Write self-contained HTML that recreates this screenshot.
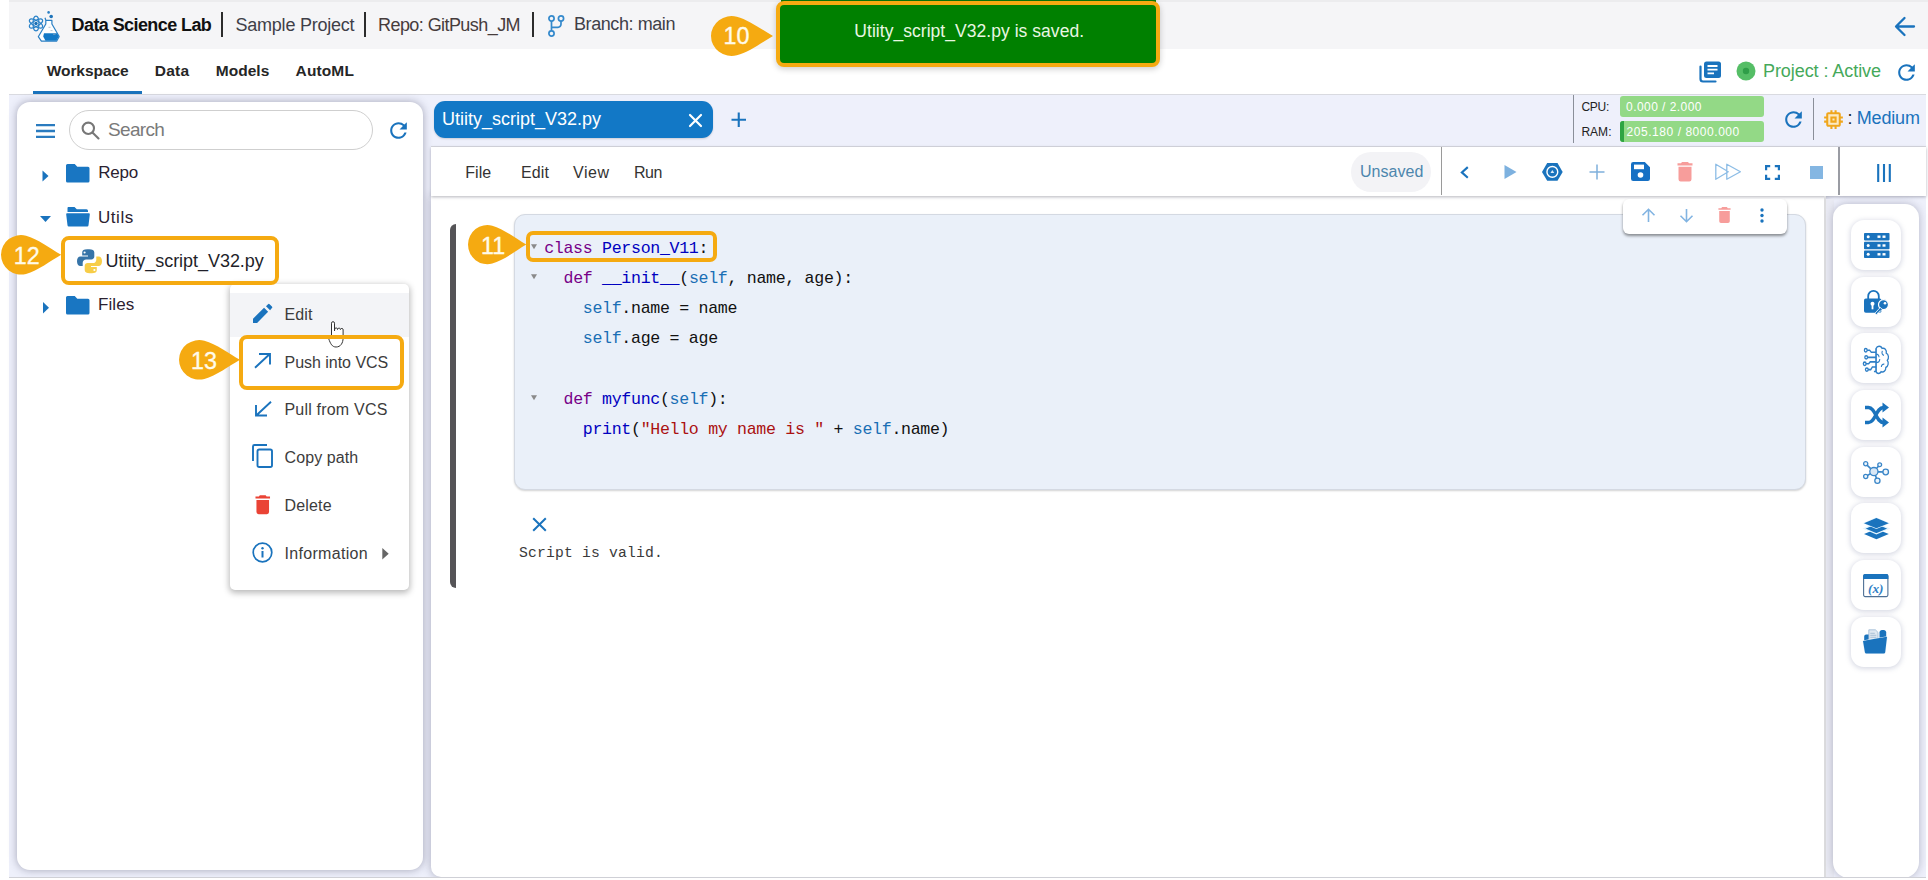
<!DOCTYPE html>
<html lang="en">
<head>
<meta charset="utf-8">
<title>Data Science Lab</title>
<style>
*{box-sizing:border-box;margin:0;padding:0}
html,body{width:1928px;height:880px;overflow:hidden;background:#fff}
body{position:relative;font-family:"Liberation Sans",sans-serif;color:#222}
.a{position:absolute}
.t{position:absolute;white-space:nowrap;line-height:1;transform-origin:0 0}
svg{position:absolute;overflow:visible}
.mono{font-family:"Liberation Mono",monospace}
pre.t{white-space:pre}
/* page regions */
#hdr{left:9px;top:0;width:1919px;height:49px;background:#f5f5f7}
#hdrtop{left:9px;top:0;width:1919px;height:2px;background:#ececee}
#tabs{left:9px;top:49px;width:1919px;height:45px;background:#fff}
#main{left:9px;top:94px;width:1917px;height:783.500px;background:#eef0fb}
#leftp{left:17px;top:102px;width:406px;height:768px;background:#fff;border-radius:13px;box-shadow:0 0 8px 0 rgba(60,60,90,.42)}
#edp{left:431px;top:196px;width:1394px;height:681px;background:#fff;border-radius:0 0 0 10px;box-shadow:0 0 8px 0 rgba(60,60,90,.38)}
#menubar{left:431px;top:147px;width:1495px;height:49px;background:#fff;box-shadow:0 1px 3px rgba(60,60,80,.38)}
#menubar2{left:1840px;top:147px;width:86px;height:48px;background:#fff;box-shadow:0 2px 4px rgba(90,90,110,.35)}
#rside{left:1833px;top:204px;width:86px;height:674px;background:#fff;border-radius:14px 14px 16px 16px;box-shadow:0 0 8px 0 rgba(60,60,90,.32)}
.ib{position:absolute;left:1851px;width:50px;height:50px;background:#fff;border-radius:13px;box-shadow:0 1px 5px 1px rgba(120,125,160,.28)}
.cell{left:514px;top:214px;width:1292px;height:276px;background:#eaf0f9;border:1px solid #d4d9e2;border-radius:11px;box-shadow:0 1px 2px rgba(0,0,0,.18)}
.code{font-size:16.6px;letter-spacing:-.315px;color:#111}
.kw{color:#770088}.df{color:#0000c0}.sf{color:#1a6fb5}.st{color:#aa1111}
.hl{position:absolute;border:4px solid #f5aa11;border-radius:8px}
.num{color:#fffbea;font-size:23.3px;-webkit-text-stroke:.35px #fffbea}
</style>
</head>
<body>
<div class="a" id="hdr"></div>
<div class="a" id="hdrtop"></div>
<div class="a" id="tabs"></div>
<div class="a" id="main"></div>
<!--HEADER-->
<!-- logo: atom + flask -->
<svg style="left:28px;top:10px" width="33" height="33" viewBox="0 0 33 33">
  <g fill="none" stroke="#2a82c8" stroke-width="1.250">
    <ellipse cx="8" cy="13.500" rx="7.400" ry="2.900" transform="rotate(90 8 13.500)"/>
    <ellipse cx="8" cy="13.500" rx="7.400" ry="2.900" transform="rotate(30 8 13.500)"/>
    <ellipse cx="8" cy="13.500" rx="7.400" ry="2.900" transform="rotate(150 8 13.500)"/>
  </g>
  <circle cx="8" cy="13.500" r="1.700" fill="#1b6fb4"/>
  <path d="M17 7.700L17.800 10.300V14L10.300 26.700L13.400 31.200H28.600L31.200 26.500L23.900 14V10.300H18" fill="#fdfeff" stroke="#2a7fc4" stroke-width="1.200" stroke-linejoin="round"/>
  <path d="M16 23.300H29.100L30.800 26.500L28.300 30.800H17.500L15.200 26.500z" fill="#1278c6"/>
  <path d="M20.500 17.300h2M22.500 20.600h2M25 24.300h2.500" stroke="#9ab" stroke-width=".7"/>
  <circle cx="20.600" cy="2.400" r="1.300" fill="#2a7fc4"/>
  <circle cx="23.200" cy="6.500" r="1.800" fill="#1f74ba"/>
</svg>
<span class="t" id="t_dsl" style="left:71.6px;top:15.7px;font-size:18px;font-weight:700;color:#111;letter-spacing:-0.591px">Data Science Lab</span>
<div class="a" style="left:221px;top:12px;width:1.600px;height:25px;background:#2c2c2c"></div>
<span class="t" id="t_sp" style="left:235.5px;top:16px;font-size:18px;color:#3f3f48;letter-spacing:-0.226px">Sample Project</span>
<div class="a" style="left:364px;top:12px;width:1.600px;height:25px;background:#2c2c2c"></div>
<span class="t" id="t_repo" style="left:378.0px;top:16px;font-size:18px;color:#463c3c;letter-spacing:-0.567px">Repo: GitPush_JM</span>
<div class="a" style="left:532px;top:12px;width:1.600px;height:25px;background:#2c2c2c"></div>
<svg style="left:547px;top:14px" width="18" height="24" viewBox="0 0 18 24" fill="none" stroke="#3489cc" stroke-width="1.700">
  <circle cx="4.500" cy="4.500" r="2.600"/><circle cx="14" cy="4.500" r="2.600"/><circle cx="4.500" cy="19.500" r="2.600"/>
  <path d="M4.500 7.100v9.800M14 7.100v3.200a3 3 0 0 1-3 3H4.500"/>
</svg>
<span class="t" id="t_br" style="left:574.0px;top:15px;font-size:18px;color:#3f3f48;letter-spacing:-0.422px">Branch: main</span>
<!-- back arrow -->
<svg style="left:1894px;top:16px" width="22" height="22" viewBox="0 0 22 22" fill="none" stroke="#1a73bd" stroke-width="2.300" stroke-linecap="round" stroke-linejoin="round"><path d="M20 10.500H2.500M10.500 2L2 10.500l8.500 8.500"/></svg>
<!-- tabs -->
<span class="t" id="t_ws" style="left:46.7px;top:63px;font-size:15.500px;font-weight:700;color:#262626;letter-spacing:-0.058px">Workspace</span>
<span class="t" id="t_data" style="left:154.8px;top:63px;font-size:15.500px;font-weight:700;color:#262626;letter-spacing:0.248px">Data</span>
<span class="t" id="t_models" style="left:215.8px;top:63px;font-size:15.500px;font-weight:700;color:#262626;letter-spacing:0.016px">Models</span>
<span class="t" id="t_automl" style="left:295.6px;top:63px;font-size:15.500px;font-weight:700;color:#262626;letter-spacing:0.121px">AutoML</span>
<div class="a" style="left:33px;top:91px;width:109px;height:3px;background:#1a73bd"></div>
<div class="a" style="left:9px;top:94px;width:1917px;height:1px;background:#d9dae0"></div>
<div class="a" style="left:431px;top:146px;width:1495px;height:1px;background:#d9dae0"></div>
<!-- docs icon -->
<svg style="left:1699px;top:61px" width="23" height="22" viewBox="0 0 23 22">
  <path d="M1.500 5.500v12.500a2.500 2.500 0 0 0 2.500 2.500h12.500" fill="none" stroke="#1a73bd" stroke-width="2.200" stroke-linecap="round"/>
  <rect x="5" y="0.500" width="17" height="16.500" rx="2.500" fill="#1a73bd"/>
  <path d="M8.500 5h10M8.500 8.700h10M8.500 12.400h6.500" stroke="#fff" stroke-width="1.800"/>
</svg>
<!-- green dot -->
<svg style="left:1736px;top:61px" width="20" height="20" viewBox="0 0 20 20"><circle cx="10" cy="10" r="9.500" fill="#55be66"/><circle cx="10" cy="10" r="3.200" fill="#2f9e48"/></svg>
<span class="t" id="t_pa" style="left:1763.0px;top:61.500px;font-size:18px;color:#45a95a;letter-spacing:-0.066px">Project : Active</span>
<svg style="left:1893.600px;top:59.600px" width="25" height="25" viewBox="0 0 24 24"><path fill="#1a73bd" d="M17.650 6.350A7.958 7.958 0 0 0 12 4c-4.420 0-7.990 3.580-7.990 8s3.570 8 7.990 8c3.730 0 6.840-2.550 7.730-6h-2.080A5.990 5.990 0 0 1 12 18c-3.310 0-6-2.690-6-6s2.690-6 6-6c1.660 0 3.140.69 4.220 1.780L13 11h7V4l-2.350 2.350z"/></svg>
<!--/HEADER-->
<!--LEFT-->
<div class="a" id="leftp"></div>
<!-- hamburger -->
<svg style="left:36px;top:124px" width="19" height="14" viewBox="0 0 19 14"><path d="M0 1.200h19M0 7h19M0 12.800h19" stroke="#2a7bbf" stroke-width="2.300"/></svg>
<!-- search -->
<div class="a" style="left:69px;top:110px;width:304px;height:40px;border:1px solid #cfcfcf;border-radius:20px;background:#fff"></div>
<svg style="left:81px;top:121px" width="19" height="19" viewBox="0 0 19 19" fill="none" stroke="#777" stroke-width="2.100" stroke-linecap="round"><circle cx="7.300" cy="7.300" r="5.700"/><path d="M11.700 11.700l5.800 5.800"/></svg>
<span class="t" id="t_search" style="left:108.0px;top:120.3px;font-size:19px;color:#7a7a7a;letter-spacing:-0.652px">Search</span>
<svg style="left:386px;top:117.800px" width="25" height="25" viewBox="0 0 24 24"><path fill="#1a73bd" d="M17.650 6.350A7.958 7.958 0 0 0 12 4c-4.420 0-7.990 3.580-7.990 8s3.570 8 7.990 8c3.730 0 6.840-2.550 7.730-6h-2.080A5.990 5.990 0 0 1 12 18c-3.310 0-6-2.690-6-6s2.690-6 6-6c1.660 0 3.140.69 4.220 1.780L13 11h7V4l-2.350 2.350z"/></svg>
<!-- tree: Repo -->
<svg style="left:41.500px;top:170px" width="7" height="12" viewBox="0 0 7 12"><path d="M0.500 0.500L6.500 6 .5 11.500z" fill="#1a73bd"/></svg>
<svg style="left:66px;top:164px" width="24" height="19" viewBox="0 0 24 19"><path d="M1.500 0h7.200l2.600 2.800h10.700A1.500 1.500 0 0 1 23.500 4.300V17a1.500 1.500 0 0 1-1.500 1.500H1.500A1.500 1.500 0 0 1 0 17V1.500A1.500 1.500 0 0 1 1.500 0z" fill="#1976c2"/></svg>
<span class="t" id="t_repo2" style="left:98.2px;top:164px;font-size:17px;color:#2b2230;letter-spacing:-0.185px">Repo</span>
<!-- Utils -->
<svg style="left:40px;top:216px" width="11" height="6" viewBox="0 0 11 6"><path d="M0 0h11L5.500 6z" fill="#1a73bd"/></svg>
<svg style="left:66px;top:207px" width="24" height="19.500" viewBox="0 0 24 19.500"><path d="M2 0h6.500l2.300 2.300h9.700A1.500 1.500 0 0 1 22 3.800V5H1.500V1.500A1.500 1.500 0 0 1 2 0z" fill="#1976c2"/><path d="M1.200 6.300h21.600a1 1 0 0 1 1 1.200l-1.300 10.800a1.300 1.300 0 0 1-1.300 1.200H2.800a1.300 1.300 0 0 1-1.300-1.200L.2 7.500a1 1 0 0 1 1-1.200z" fill="#1976c2"/></svg>
<span class="t" id="t_utils" style="left:98.0px;top:208.7px;font-size:17px;color:#2b2230;letter-spacing:0.537px">Utils</span>
<!-- python file -->
<svg style="left:77px;top:248.500px" width="25" height="24.500" viewBox="0 0 25 24.500">
  <path d="M10.200 0.300c-3.400 0-5 1.100-5 3.300v2.900h5.800v1H3.400C1.300 7.500 0 9.300 0 12.300c0 3 1.300 4.700 3.400 4.700h2.300v-3.200c0-2 1.500-3.400 3.500-3.400h5.200c1.700 0 2.900-1.200 2.900-2.900V3.600c0-2.200-2-3.300-5-3.300h-2.100z" fill="#3674a8"/>
  <circle cx="7.600" cy="3.500" r="1.100" fill="#fff"/>
  <path d="M14.800 24.200c3.400 0 5-1.100 5-3.300V18h-5.800v-1h7.600c2.100 0 3.400-1.800 3.400-4.800 0-3-1.300-4.700-3.400-4.700h-2.300v3.200c0 2-1.500 3.400-3.500 3.400h-5.200c-1.700 0-2.900 1.200-2.900 2.900v3.900c0 2.200 2 3.300 5 3.300h2.100z" fill="#f7cd48"/>
  <circle cx="17.400" cy="21" r="1.100" fill="#fff"/>
</svg>
<span class="t" id="t_file" style="left:105.5px;top:251.500px;font-size:18px;color:#1f1f2a;letter-spacing:-0.041px">Utiity_script_V32.py</span>
<!-- Files -->
<svg style="left:42.500px;top:301.500px" width="6" height="11.500" viewBox="0 0 6 11.500"><path d="M0 0L6 5.750 0 11.500z" fill="#1a73bd"/></svg>
<svg style="left:66px;top:296px" width="24" height="19" viewBox="0 0 24 19"><path d="M1.500 0h7.200l2.600 2.800h10.700A1.500 1.500 0 0 1 23.500 4.300V17a1.500 1.500 0 0 1-1.500 1.500H1.500A1.500 1.500 0 0 1 0 17V1.500A1.500 1.500 0 0 1 1.500 0z" fill="#1976c2"/></svg>
<span class="t" id="t_files" style="left:98.0px;top:295.500px;font-size:17px;color:#2b2230;letter-spacing:0.069px">Files</span>
<!--/LEFT-->
<!--EDITOR-->
<!-- file tab -->
<div class="a" style="left:433.500px;top:100.500px;width:279px;height:37.500px;background:#1278c6;border-radius:11px;box-shadow:0 1px 2px rgba(0,0,0,.15)"></div>
<span class="t" id="t_tab" style="left:442.0px;top:110px;font-size:18px;color:#fff;letter-spacing:-0.004px">Utiity_script_V32.py</span>
<svg style="left:688.500px;top:113.500px" width="13" height="13" viewBox="0 0 13 13"><path d="M1 1l11 11M12 1L1 12" stroke="#fff" stroke-width="2.200" stroke-linecap="round"/></svg>
<svg style="left:731px;top:112px" width="15.500" height="15.500" viewBox="0 0 15.500 15.500"><path d="M7.750 .5v14.500M.5 7.750h14.500" stroke="#1a73bd" stroke-width="2.100"/></svg>
<!-- resources -->
<div class="a" style="left:1573px;top:95px;width:1px;height:48px;background:#8a8f99"></div>
<span class="t" id="t_cpu" style="left:1581.4px;top:101px;font-size:12px;color:#222;letter-spacing:-0.218px">CPU:</span>
<div class="a" style="left:1620px;top:96px;width:144px;height:21px;background:#93d986;border-radius:3px"></div>
<span class="t" id="t_cpuv" style="left:1626.0px;top:100.500px;font-size:12px;color:#fff;letter-spacing:0.457px">0.000 / 2.000</span>
<span class="t" id="t_ram" style="left:1581.4px;top:126px;font-size:12px;color:#222;letter-spacing:0.025px">RAM:</span>
<div class="a" style="left:1620px;top:121px;width:144px;height:21px;background:#93d986;border-radius:3px"></div>
<div class="a" style="left:1620px;top:121px;width:4px;height:21px;background:#2ea443;border-radius:3px 0 0 3px"></div>
<span class="t" id="t_ramv" style="left:1626.6px;top:125.500px;font-size:12px;color:#fff;letter-spacing:0.542px">205.180 / 8000.000</span>
<svg style="left:1780.700px;top:106.900px" width="25" height="25" viewBox="0 0 24 24"><path fill="#1a73bd" d="M17.650 6.350A7.958 7.958 0 0 0 12 4c-4.420 0-7.990 3.580-7.990 8s3.570 8 7.990 8c3.730 0 6.840-2.550 7.730-6h-2.080A5.990 5.990 0 0 1 12 18c-3.310 0-6-2.690-6-6s2.690-6 6-6c1.660 0 3.140.69 4.220 1.780L13 11h7V4l-2.350 2.350z"/></svg>
<div class="a" style="left:1813px;top:98px;width:1px;height:42px;background:#8a8f99"></div>
<!-- chip icon -->
<svg style="left:1820.900px;top:107px" width="25" height="25" viewBox="0 0 24 24"><rect x="7" y="7" width="10" height="10" fill="#fdeac0"/><path fill="#f0a61c" d="M15 9H9v6h6V9zm-2 4h-2v-2h2v2zm8-2V9h-2V7c0-1.100-.9-2-2-2h-2V3h-2v2h-2V3H9v2H7c-1.100 0-2 .9-2 2v2H3v2h2v2H3v2h2v2c0 1.100.9 2 2 2h2v2h2v-2h2v2h2v-2h2c1.100 0 2-.9 2-2v-2h2v-2h-2v-2h2zm-4 6H7V7h10v10z"/></svg>
<span class="t" id="t_colon" style="left:1847.500px;top:108.6px;font-size:18px;color:#222">:</span>
<span class="t" id="t_med" style="left:1856.8px;top:108.6px;font-size:18px;color:#1a73bd;letter-spacing:-0.172px">Medium</span>
<!-- editor panel -->
<div class="a" id="edp"></div>
<!-- menubar -->
<div class="a" id="menubar"></div>
<div class="a" style="left:1838px;top:147px;width:1.500px;height:48px;background:#9a9ca3"></div>
<span class="t" id="t_mfile" style="left:465.2px;top:165.200px;font-size:16px;color:#333;letter-spacing:0.055px">File</span>
<span class="t" id="t_medit" style="left:521.0px;top:165.200px;font-size:16px;color:#333;letter-spacing:0.105px">Edit</span>
<span class="t" id="t_mview" style="left:573.0px;top:165.200px;font-size:16px;color:#333;letter-spacing:0.527px">View</span>
<span class="t" id="t_mrun" style="left:634.0px;top:165.200px;font-size:16px;color:#333;letter-spacing:-0.453px">Run</span>
<div class="a" style="left:1351px;top:151.500px;width:80px;height:40px;border-radius:20px;background:#f3f3f6"></div>
<span class="t" id="t_unsaved" style="left:1360.0px;top:163.6px;font-size:16px;color:#4d86ad;letter-spacing:0.049px">Unsaved</span>
<div class="a" style="left:1441px;top:147px;width:1px;height:48px;background:#9a9a9a"></div>
<!-- toolbar icons -->
<svg style="left:1459.700px;top:165.600px" width="9.200" height="12.800" viewBox="0 0 10 14"><path d="M8.500 1.200L2 7l6.500 5.800" fill="none" stroke="#1a73bd" stroke-width="2.300"/></svg>
<svg style="left:1503.500px;top:165px" width="13" height="14" viewBox="0 0 13 14"><path d="M0.500 0l12 7-12 7z" fill="#7db1df"/></svg>
<svg style="left:1542.300px;top:162.700px" width="20.700" height="17.800" viewBox="0 0 20.700 17.800"><path d="M0 8.900L5.200 0h10.300l5.200 8.900-5.200 8.900H5.200z" fill="#1a73bd"/><circle cx="10.350" cy="8.900" r="5.400" fill="none" stroke="#fff" stroke-width="1.400"/><path d="M10.350 6.900l1.900 3.200h-3.800z" fill="#dbe9f6"/></svg>
<svg style="left:1588.500px;top:164px" width="16" height="16" viewBox="0 0 16 16"><path d="M8 .5v15M.5 8h15" stroke="#7fb0dc" stroke-width="1.500"/></svg>
<svg style="left:1630.700px;top:162.200px" width="19" height="19" viewBox="0 0 19 19"><path d="M2.200 0h11.600L19 5.200v11.600a2.200 2.200 0 0 1-2.200 2.200H2.200A2.200 2.200 0 0 1 0 16.800V2.200A2.200 2.200 0 0 1 2.200 0z" fill="#1670c4"/><rect x="3" y="2.600" width="10" height="4.600" fill="#fff"/><circle cx="9.500" cy="13" r="2.800" fill="#fff"/></svg>
<svg style="left:1676.500px;top:162px" width="16" height="19.500" viewBox="0 0 16 19.500"><path d="M5 0h6l1 1.300h3.500v2.100H.5V1.300H4z" fill="#f79d9b"/><path d="M1.500 4.800h13v12.500a2.200 2.200 0 0 1-2.200 2.200H3.700a2.200 2.200 0 0 1-2.200-2.200z" fill="#f79d9b"/></svg>
<svg style="left:1715px;top:163px" width="26.500" height="17.500" viewBox="0 0 26.500 17.500"><path d="M.8 1.200L13.300 8.750 .8 16.300zM11.800 1.200L25.400 8.750 11.800 16.300z" fill="none" stroke="#8dbde6" stroke-width="1.300" stroke-linejoin="round"/></svg>
<svg style="left:1765px;top:164.500px" width="15" height="15" viewBox="0 0 15 15"><path d="M1.100 5.200V1.100h4.100M9.800 1.100h4.100v4.100M13.900 9.800v4.100H9.800M5.200 13.900H1.100V9.800" fill="none" stroke="#1a73bd" stroke-width="2.200"/></svg>
<div class="a" style="left:1810px;top:166px;width:12.500px;height:12.500px;background:#84b6e2"></div>
<svg style="left:1876.500px;top:163.500px" width="14" height="18" viewBox="0 0 14 18"><path d="M1.200 0v18M7 0v18M12.800 0v18" stroke="#1a73bd" stroke-width="2.100"/></svg>
<!-- left bracket -->
<div class="a" style="left:449.500px;top:223.500px;width:6.500px;height:364.500px;background:#555457;border-radius:6.500px 0 0 6.500px"></div>
<!-- cell -->
<div class="a cell"></div>
<svg style="left:531px;top:244px" width="6" height="5.400" viewBox="0 0 6 5"><path d="M0 0h6L3 5z" fill="#8a8a8a"/></svg>
<svg style="left:531px;top:274px" width="6" height="5.400" viewBox="0 0 6 5"><path d="M0 0h6L3 5z" fill="#8a8a8a"/></svg>
<svg style="left:531px;top:395px" width="6" height="5.400" viewBox="0 0 6 5"><path d="M0 0h6L3 5z" fill="#8a8a8a"/></svg>
<pre class="t mono code" id="c1" style="left:544.200px;top:240.7px"><span class="kw">class</span> <span class="df">Person_V11</span>:</pre>
<pre class="t mono code" id="c2" style="left:544.200px;top:270.9px">  <span class="kw">def</span> <span class="df">__init__</span>(<span class="sf">self</span>, name, age):</pre>
<pre class="t mono code" id="c3" style="left:544.200px;top:301.1px">    <span class="sf">self</span>.name = name</pre>
<pre class="t mono code" id="c4" style="left:544.200px;top:331.3px">    <span class="sf">self</span>.age = age</pre>
<pre class="t mono code" id="c5" style="left:544.200px;top:391.7px">  <span class="kw">def</span> <span class="df">myfunc</span>(<span class="sf">self</span>):</pre>
<pre class="t mono code" id="c6" style="left:544.200px;top:421.9px">    <span class="df">print</span>(<span class="st">"Hello my name is "</span> + <span class="sf">self</span>.name)</pre>
<!-- cell toolbar -->
<div class="a" style="left:1622.500px;top:198.500px;width:164.500px;height:35px;background:#fff;border-radius:6px;box-shadow:0 2px 3px rgba(0,0,0,.42)"></div>
<svg style="left:1640.500px;top:208px" width="15" height="15" viewBox="0 0 15 15"><path d="M7.500 14V1.500M1.500 7.300l6-6 6 6" fill="none" stroke="#82b4e2" stroke-width="1.600"/></svg>
<svg style="left:1678.500px;top:208px" width="15" height="15" viewBox="0 0 15 15"><path d="M7.500 1v12.500M1.500 7.700l6 6 6-6" fill="none" stroke="#82b4e2" stroke-width="1.600"/></svg>
<svg style="left:1717.500px;top:207px" width="13" height="16" viewBox="0 0 16 19.500"><path d="M5 0h6l1 1.300h3.500v2.100H.5V1.300H4z" fill="#f79d9b"/><path d="M1.500 4.800h13v12.500a2.200 2.200 0 0 1-2.200 2.200H3.700a2.200 2.200 0 0 1-2.200-2.200z" fill="#f79d9b"/></svg>
<svg style="left:1759.500px;top:208px" width="4" height="15" viewBox="0 0 4 15"><circle cx="2" cy="2" r="1.700" fill="#1a73bd"/><circle cx="2" cy="7.500" r="1.700" fill="#1a73bd"/><circle cx="2" cy="13" r="1.700" fill="#1a73bd"/></svg>
<!-- output -->
<svg style="left:532px;top:517px" width="15" height="15" viewBox="0 0 15 15"><path d="M1.200 1.200l12.600 12.600M13.800 1.200L1.200 13.800" stroke="#1a73bd" stroke-width="2"/></svg>
<pre class="t mono" id="t_valid" style="left:519px;top:546px;font-size:14.700px;color:#3a3a3a;letter-spacing:0.19px">Script is valid.</pre>
<!--/EDITOR-->
<!--RIGHT-->
<div class="a" style="left:1824.500px;top:199px;width:9px;height:679px;background:#e9eaf3"></div>
<div class="a" style="left:1824px;top:196px;width:1.700px;height:682px;background:#dcdcde"></div>
<div class="a" id="rside"></div>
<div class="ib" style="top:219.8px"></div>
<div class="ib" style="top:276.5px"></div>
<div class="ib" style="top:333.2px"></div>
<div class="ib" style="top:389.9px"></div>
<div class="ib" style="top:446.6px"></div>
<div class="ib" style="top:503.4px"></div>
<div class="ib" style="top:560.1px"></div>
<div class="ib" style="top:616.8px"></div>
<!-- 1 server -->
<svg style="left:1863.500px;top:233px" width="25.500" height="25" viewBox="0 0 25.500 25">
  <g fill="#1a73bd"><rect x="0" y="0" width="25.500" height="7.400" rx=".8"/><rect x="0" y="8.800" width="25.500" height="7.400" rx=".8"/><rect x="0" y="17.600" width="25.500" height="7.400" rx=".8"/></g>
  <g fill="#fff"><circle cx="4.200" cy="3.700" r="1.500"/><circle cx="4.200" cy="12.500" r="1.500"/><circle cx="4.200" cy="21.300" r="1.500"/>
  <rect x="13.500" y="2.500" width="3" height="2.400"/><rect x="18.500" y="2.500" width="3" height="2.400"/><rect x="13.500" y="11.300" width="3" height="2.400"/><rect x="18.500" y="11.300" width="3" height="2.400"/><rect x="13.500" y="20.100" width="3" height="2.400"/><rect x="18.500" y="20.100" width="3" height="2.400"/></g>
</svg>
<!-- 2 lock + key -->
<svg style="left:1863.500px;top:290px" width="25" height="25" viewBox="0 0 25 25">
  <path d="M4.200 9V6.200a5.300 5.300 0 0 1 10.600 0V9" fill="none" stroke="#1a73bd" stroke-width="1.800"/>
  <rect x="0" y="8.600" width="17.500" height="14.200" rx="1.800" fill="#1a73bd"/>
  <circle cx="8.500" cy="13.800" r="2" fill="#fff"/><rect x="7.600" y="14.500" width="1.800" height="4.800" fill="#fff"/>
  <circle cx="19.500" cy="14.600" r="5" fill="#1a73bd" stroke="#fff" stroke-width="1.200"/>
  <circle cx="21" cy="13.200" r="1.300" fill="#fff"/>
  <path d="M16.200 17.500l-5.200 5.700 1.200 1.300 1.300-.2.200-1.400 1.400-.2.200-1.400 1.500-.200 1.500-1.700z" fill="#1a73bd" stroke="#fff" stroke-width=".8"/>
</svg>
<!-- 3 brain circuits -->
<svg style="left:1863.200px;top:345.500px" width="26" height="26.600" viewBox="1.700 2.200 24.500 20.600" preserveAspectRatio="none" fill="none" stroke="#2f7fc6" stroke-width="1.200">
  <path d="M14 4.200c1-2.200 4.600-2.400 5.700-.2 2.400-.6 4.500 1.400 3.900 3.700 2.300 1 2.800 4 1 5.600 1.600 1.800.9 4.800-1.400 5.500.2 2.500-2.200 4.200-4.400 3.300-1.100 1.900-3.900 1.900-4.800 0z"/>
  <path d="M14 4.200v17.900M14 8.500c1.700 0 2.800 1 2.800 2.500M14 15c1.800 0 3.500-.7 3.500-2.800M20 6c-1 1.500-.2 3.200 1.500 3.500M19 18.500c0-1.500 1.200-2.500 2.800-2.300" stroke-width="1"/>
  <path d="M14 7H9.500L8 5.500H5.500M14 11H6M14 14.500H8.500L7 16H4.500M14 18.500h-3.500L9 20.500H6.500M14 22h-2"/>
  <circle cx="4.300" cy="5.500" r="1.300"/><circle cx="4.700" cy="11" r="1.300"/><circle cx="3.300" cy="16" r="1.300"/><circle cx="5.300" cy="20.500" r="1.300"/>
</svg>
<!-- 4 shuffle -->
<svg style="left:1863.500px;top:402px" width="25" height="26" viewBox="0 0 25 26">
  <path d="M1 5.500h3.500c7 0 7.500 15 15 15h1M1 20.500h3.500c7 0 7.500-15 15-15h1" fill="none" stroke="#1a73bd" stroke-width="3.400"/>
  <path d="M18.500 0.500L25 5.500l-6.500 5zM18.500 15.500L25 20.500l-6.500 5z" fill="#1a73bd"/>
</svg>
<!-- 5 network -->
<svg style="left:1863px;top:460px" width="27" height="25" viewBox="0 0 27 25" fill="none" stroke="#3a86c8" stroke-width="1.300">
  <path d="M10.900 11.600L2.700 3.800M10.900 11.600L16.700 4.800M10.900 11.600l11.700.4M10.900 11.600L14.400 20.600M10.900 11.600L2.700 16.500" stroke-width="1.600"/>
  <circle cx="10.900" cy="11.600" r="4.100" fill="#d9e7f5"/>
  <circle cx="2.700" cy="3.800" r="2.100" fill="#eef5fb"/><circle cx="16.700" cy="4.800" r="1.900" fill="#eef5fb"/><circle cx="22.700" cy="12" r="2.800" fill="#eef5fb"/><circle cx="14.400" cy="20.800" r="2.600" fill="#eef5fb"/><circle cx="2.700" cy="16.500" r="2.100" fill="#eef5fb"/>
</svg>
<!-- 6 layers -->
<svg style="left:1863.800px;top:518.300px" width="25" height="22" viewBox="0 0 25 22">
  <path d="M12.400 10.900L24.800 16.050 12.400 21.200 0 16.050z" fill="#1a73bd"/>
  <path d="M12.400 5.450L24.800 10.600 12.400 15.750 0 10.600z" fill="#1a73bd" stroke="#e6f6ff" stroke-width="1.200"/>
  <path d="M12.400 0L24.800 5.150 12.400 10.300 0 5.150z" fill="#1a73bd" stroke="#e6f6ff" stroke-width="1.200"/>
  <path d="M12.400 0L24.800 5.150 12.400 10.300 0 5.150z" fill="#1a73bd"/>
</svg>
<!-- 7 variable window -->
<svg style="left:1863.400px;top:573.700px" width="25.500" height="23.200" viewBox="0 0 25.500 23.200">
  <rect x=".6" y=".6" width="24.300" height="22" rx="1.500" fill="#fff" stroke="#4d6f94" stroke-width="1.100"/>
  <path d="M.1 2A1.900 1.900 0 0 1 2 .1h21.500a1.900 1.900 0 0 1 1.900 1.900V5H.1z" fill="#1a73bd"/>
  <text x="12.800" y="18.700" font-family="Liberation Serif,serif" font-style="italic" font-weight="700" font-size="13.500" fill="#2f7fc6" text-anchor="middle" textLength="15.500" lengthAdjust="spacingAndGlyphs">(x)</text>
</svg>
<!-- 8 folder with docs -->
<svg style="left:1863.400px;top:629px" width="24.500" height="25" viewBox="0 0 24.500 25">
  <path d="M16.500 3.400c0-1.400 1.100-2.500 2.500-2.500h1.700c1.400 0 2.500 1.100 2.500 2.500V12h-6.700z" fill="#1a73bd"/>
  <path d="M1.200 7.500c0-1.100.9-2 2-2h3V12h-5z" fill="#1a73bd"/>
  <path d="M5.800 .8h6.600l2.600 2.600v8.600H5.800z" fill="#dfe8f1" stroke="#8fb0cf" stroke-width=".7"/>
  <path d="M7.300 4.300h4.500M7.300 6.300h6M7.300 8.300h6" stroke="#9db6cf" stroke-width=".8"/>
  <path d="M0 11.900c8-1.600 16-2.600 24-4.100l-1.800 15.400a1.500 1.500 0 0 1-1.500 1.300H3.400a1.500 1.500 0 0 1-1.500-1.300z" fill="#1a73bd" stroke="#e8f4fc" stroke-width="1" paint-order="stroke"/>
</svg>
<!--/RIGHT-->
<div class="a" style="left:9px;top:877px;width:1917px;height:1px;background:#cfd0d6"></div>
<div class="a" style="left:0;top:878px;width:1928px;height:2px;background:#fff"></div>
<!--OVERLAYS-->
<!-- context menu -->
<div class="a" style="left:230px;top:284px;width:178.500px;height:305.500px;background:#fff;border-radius:5px;box-shadow:0 2px 6px 1px rgba(0,0,0,.28)"></div>
<div class="a" style="left:230px;top:293px;width:178.500px;height:44px;background:#f3f4f7"></div>
<svg style="left:253px;top:303.500px" width="20" height="19" viewBox="0 0 20 19"><path d="M0 14.800V19h4.200L15.600 7.600 11.400 3.400zM19.500 3.700a1.100 1.100 0 0 0 0-1.600L17.100-.3a1.100 1.100 0 0 0-1.600 0L13.400 1.800 17.600 6z" fill="#1a73bd" transform="translate(0 .5) scale(.97)"/></svg>
<span class="t" id="m_edit" style="left:284.5px;top:306.8px;font-size:16px;color:#3c3c3c;letter-spacing:0.105px">Edit</span>
<svg style="left:253.800px;top:352.500px" width="17" height="15.500" viewBox="0 0 17 15.500" fill="none" stroke="#1a73bd" stroke-width="1.900"><path d="M1 14.800L15.500 1.200M5 1h11v10.500"/></svg>
<span class="t" id="m_push" style="left:284.5px;top:355.0px;font-size:16px;color:#3c3c3c;letter-spacing:-0.024px">Push into VCS</span>
<svg style="left:254.500px;top:400.500px" width="17" height="15.500" viewBox="0 0 17 15.500" fill="none" stroke="#1a73bd" stroke-width="1.900"><path d="M16 .8L1.500 14.300M12 14.500H1V4"/></svg>
<span class="t" id="m_pull" style="left:284.5px;top:402.1px;font-size:16px;color:#3c3c3c;letter-spacing:0.195px">Pull from VCS</span>
<svg style="left:252px;top:444px" width="21" height="24" viewBox="0 0 21 24" fill="none" stroke="#1a73bd" stroke-width="1.900"><path d="M1 17V2.500A1.500 1.500 0 0 1 2.500 1H15"/><rect x="5.500" y="5.500" width="14.500" height="17.500" rx="1.800"/></svg>
<span class="t" id="m_copy" style="left:284.6px;top:450.2px;font-size:16px;color:#3c3c3c;letter-spacing:0.085px">Copy path</span>
<svg style="left:255px;top:494.500px" width="15.500" height="19.500" viewBox="0 0 16 19.500"><path d="M5 0h6l1 1.300h3.500v2.100H.5V1.300H4z" fill="#ea4335"/><path d="M1.500 4.800h13v12.500a2.200 2.200 0 0 1-2.200 2.200H3.700a2.200 2.200 0 0 1-2.200-2.200z" fill="#ea4335"/></svg>
<span class="t" id="m_del" style="left:284.5px;top:498.1px;font-size:16px;color:#3c3c3c;letter-spacing:0.175px">Delete</span>
<svg style="left:252px;top:541.500px" width="21" height="21" viewBox="0 0 21 21"><circle cx="10.500" cy="10.500" r="9.300" fill="none" stroke="#1a73bd" stroke-width="1.700"/><rect x="9.500" y="9" width="2" height="6.500" fill="#1a73bd"/><circle cx="10.500" cy="6.200" r="1.200" fill="#1a73bd"/></svg>
<span class="t" id="m_info" style="left:284.5px;top:546.0px;font-size:16px;color:#3c3c3c;letter-spacing:0.305px">Information</span>
<svg style="left:382px;top:548px" width="7" height="11.500" viewBox="0 0 7 11.500"><path d="M.3 0L6.700 5.750 .3 11.500z" fill="#666"/></svg>
<!-- cursor hand -->
<svg style="left:328px;top:321px" width="17" height="28" viewBox="0 0 17 28" fill="#fff" stroke="#333" stroke-width="1" stroke-linejoin="round"><path d="M3.500 14V2.200a1.500 1.500 0 0 1 3 0V10l.2-1.800a1.400 1.400 0 0 1 2.800.3l.2-.5a1.400 1.400 0 0 1 2.700.6l.2-.3a1.300 1.300 0 0 1 2.500.7v8c0 5-2.500 9-7 9-4 0-5.500-3-7.500-8.500-.5-1.500 1.500-2.500 2.500-1z"/></svg>
<!-- callouts -->
<div class="a" style="left:781px;top:0;width:375px;height:3px;background:#0a7a0a"></div>
<div class="hl" style="left:776px;top:1px;width:384px;height:66.300px;border-radius:8px;background:#008000;box-shadow:0 2px 6px rgba(0,0,0,.2)"></div>
<span class="t" id="t_toast" style="left:854.3px;top:23px;font-size:17.5px;color:#e9f7e2;letter-spacing:0.041px">Utiity_script_V32.py is saved.</span>
<svg style="left:711px;top:16px" width="62" height="40" viewBox="0 0 60.500 40" preserveAspectRatio="none"><path d="M25.180 .680C36.800 3.800 50.100 14 60.500 20 50.100 26 36.800 36.200 25.180 39.320A20 20 0 1 1 25.180 .680z" fill="#f5aa11"/></svg>
<span class="t num" id="n10" style="left:723.5px;top:25.2px">10</span>
<div class="hl" style="left:526px;top:231.400px;width:191px;height:30.600px;border-width:4px;border-radius:7px"></div>
<svg style="left:467.7px;top:225.3px" width="58.3" height="39.2" viewBox="0 0 60.500 40" preserveAspectRatio="none"><path d="M25.180 .680C36.800 3.800 50.100 14 60.500 20 50.100 26 36.800 36.200 25.180 39.320A20 20 0 1 1 25.180 .680z" fill="#f5aa11"/></svg>
<span class="t num" id="n11" style="left:481.1px;top:234.5px">11</span>
<div class="hl" style="left:61.200px;top:236.100px;width:217.500px;height:48.600px"></div>
<svg style="left:1.1px;top:235px" width="60.2" height="39.6" viewBox="0 0 60.500 40" preserveAspectRatio="none"><path d="M25.180 .680C36.800 3.800 50.100 14 60.500 20 50.100 26 36.800 36.200 25.180 39.320A20 20 0 1 1 25.180 .680z" fill="#f5aa11"/></svg>
<span class="t num" id="n12" style="left:13.8px;top:244.6px">12</span>
<div class="hl" style="left:239px;top:334.700px;width:165px;height:55.800px"></div>
<svg style="left:178.8px;top:339.9px" width="61" height="39.6" viewBox="0 0 60.500 40" preserveAspectRatio="none"><path d="M25.180 .680C36.800 3.800 50.100 14 60.500 20 50.100 26 36.800 36.200 25.180 39.320A20 20 0 1 1 25.180 .680z" fill="#f5aa11"/></svg>
<span class="t num" id="n13" style="left:191.0px;top:349.7px">13</span>
<!--/OVERLAYS-->
</body>
</html>
